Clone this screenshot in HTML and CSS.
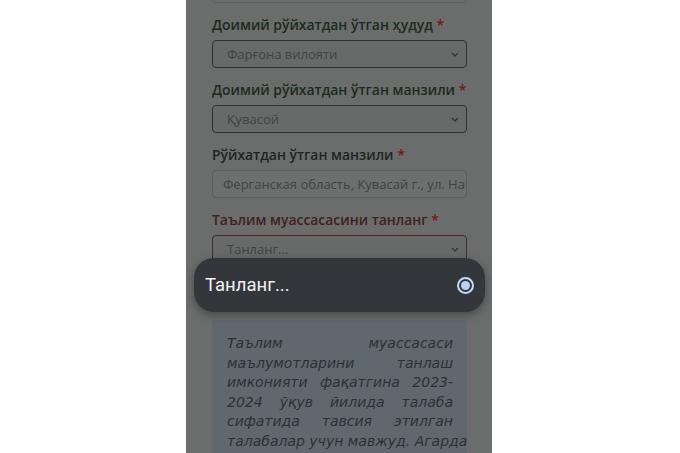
FILE: index.html
```html
<!DOCTYPE html>
<html lang="uz">
<head>
<meta charset="utf-8">
<title>Таълим муассасаси</title>
<link rel="stylesheet" href="styles.css">
</head>
<body>
<div class="screen">
  <div class="form">
    <div class="field field-cut"></div>

    <div class="group">
      <div class="label label-ok">Доимий рўйхатдан ўтган ҳудуд <span class="req">*</span></div>
      <div class="field select select-ok">
        <span class="value">Фарғона вилояти</span>
        <svg class="chev" viewBox="0 0 8 5" width="8" height="5"><path d="M1 1l3 3 3-3" fill="none" stroke="#2e3231" stroke-width="1.2"/></svg>
      </div>
    </div>

    <div class="group">
      <div class="label label-ok">Доимий рўйхатдан ўтган манзили <span class="req">*</span></div>
      <div class="field select select-ok">
        <span class="value">Қувасой</span>
        <svg class="chev" viewBox="0 0 8 5" width="8" height="5"><path d="M1 1l3 3 3-3" fill="none" stroke="#2e3231" stroke-width="1.2"/></svg>
      </div>
    </div>

    <div class="group">
      <div class="label">Рўйхатдан ўтган манзили <span class="req">*</span></div>
      <div class="field input">
        <span class="value">Ферганская область, Кувасай г., ул. Набережная</span>
      </div>
    </div>

    <div class="group">
      <div class="label label-err">Таълим муассасасини танланг <span class="req">*</span></div>
      <div class="field select select-err">
        <span class="value">Танланг...</span>
        <svg class="chev" viewBox="0 0 8 5" width="8" height="5"><path d="M1 1l3 3 3-3" fill="none" stroke="#2e3231" stroke-width="1.2"/></svg>
      </div>
    </div>

    <div class="info">
      <span class="line">Таълим муассасаси</span>
      <span class="line">маълумотларини танлаш</span>
      <span class="line">имконияти фақатгина 2023-</span>
      <span class="line">2024 ўқув йилида талаба</span>
      <span class="line">сифатида тавсия этилган</span>
      <span class="line">талабалар учун мавжуд. Агарда</span>
    </div>
  </div>

  <div class="sheet">
    <span class="sheet-text">Танланг...</span>
    <span class="radio"><span class="radio-dot"></span></span>
  </div>
</div>
</body>
</html>
```

FILE: styles.css
```css
html, body {
  margin: 0;
  padding: 0;
  background: #ffffff;
}

body {
  width: 680px;
  height: 453px;
  overflow: hidden;
}

.screen {
  position: relative;
  margin-left: 186px;
  width: 306px;
  height: 453px;
  overflow: hidden;
  background: #6a6d6c;
  font-family: "Open Sans", "Noto Sans", sans-serif;
}

.form {
  padding: 0 25px 0 26px;
  display: flex;
  flex-direction: column;
}

.field {
  box-sizing: border-box;
  height: 28px;
  border-radius: 4px;
  display: flex;
  align-items: center;
}

.field-cut {
  margin-top: -25px;
  border: 1px solid #5d605f;
  background: #6c6f6e;
}

.group {
  margin-top: 12px;
  display: flex;
  flex-direction: column;
  gap: 5px;
}

.label {
  height: 20px;
  line-height: 20px;
  font-size: 13.9px;
  font-weight: 600;
  color: #222423;
  white-space: nowrap;
}

.label-ok { color: #1c2b20; }
.label-err { color: #43201f; }

.req {
  color: #6c1d1d;
  font-size: 14px;
}

.select {
  border: 1px solid #26372b;
  background: #676a69;
  padding: 0 7px 0 14px;
  justify-content: space-between;
}

.select-err { border-color: #4c2928; }

.input {
  border: 1px solid #5c5f5e;
  background: #6c6f6e;
  padding: 0 0 0 10px;
  overflow: hidden;
}

.value {
  font-size: 13px;
  color: #404342;
  white-space: nowrap;
}

.chev { flex: none; }

.info {
  margin-top: 57px;
  background: #5f686c;
  border-radius: 3px;
  padding: 14px 14px 14px 15px;
  display: flex;
  flex-direction: column;
}

.line {
  display: block;
  font-family: "DejaVu Sans", "Noto Sans", sans-serif;
  font-size: 14px;
  line-height: 19.5px;
  font-style: italic;
  color: #2b3136;
  text-align: justify;
  text-align-last: justify;
  white-space: nowrap;
}

.sheet {
  position: absolute;
  left: 8px;
  top: 258px;
  width: 291px;
  height: 54px;
  box-sizing: border-box;
  border-radius: 20px;
  background: #33363a;
  box-shadow: 0 3px 10px rgba(0, 0, 0, 0.35);
  display: flex;
  align-items: center;
  justify-content: space-between;
  padding: 0 11px 0 11px;
}

.sheet-text {
  font-family: Roboto, "Noto Sans", sans-serif;
  font-size: 18.5px;
  color: #f1f2f3;
}

.radio {
  box-sizing: border-box;
  width: 17px;
  height: 17px;
  border-radius: 50%;
  border: 2px solid #c3dafc;
  display: flex;
  align-items: center;
  justify-content: center;
}

.radio-dot {
  width: 9px;
  height: 9px;
  border-radius: 50%;
  background: #b8d2fa;
}
```
